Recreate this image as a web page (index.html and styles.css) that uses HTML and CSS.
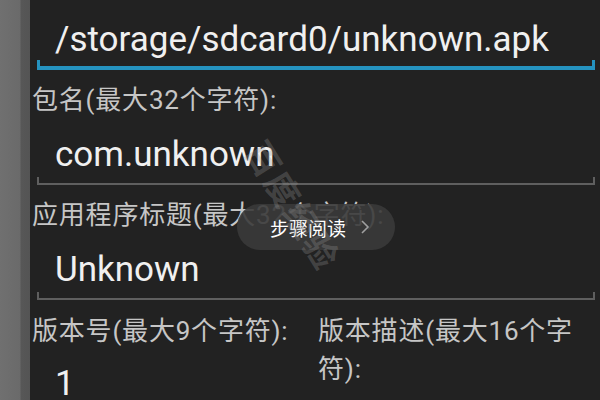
FILE: index.html
```html
<!DOCTYPE html>
<html lang="zh-CN">
<head>
    <meta charset="UTF-8">
    <meta name="viewport" content="width=device-width, initial-scale=1.0">
    <title>APK 信息</title>
    <link rel="stylesheet" href="styles.css">
</head>
<body>

<div class="screen">
    <div class="rail"></div>

    <div class="form">
        <div class="value">/storage/sdcard0/unknown.apk</div>
        <div class="line focused"></div>

        <div class="label">包名(最大32个字符):</div>
        <div class="value">com.unknown</div>
        <div class="line"></div>

        <div class="label">应用程序标题(最大32个字符):</div>
        <div class="value">Unknown</div>
        <div class="line"></div>

        <div class="pair">
            <div>
                <div class="label">版本号(最大9个字符):</div>
                <div class="value">1</div>
            </div>
            <div>
                <div class="label">版本描述(最大16个字符):</div>
            </div>
        </div>
    </div>

    <div class="watermark">百度经验</div>
    <div class="step-pill">
        <span>步骤阅读</span>
        <svg class="chev" width="10" height="16" viewBox="0 0 10 16">
            <path d="M2 2 L8 8 L2 14" fill="none" stroke="#a0a0a0" stroke-width="1.6"/>
        </svg>
    </div>
</div>

</body>
</html>
```

FILE: styles.css
```css
body {
    margin: 0;
    padding: 0;
    background-color: #222222;
    font-family: Roboto, "Noto Sans CJK SC", sans-serif;
}

.screen {
    position: relative;
    display: flex;
    width: 600px;
    height: 400px;
    overflow: hidden;
}

.rail {
    width: 30px;
    flex: none;
    background: linear-gradient(to right, #707070 0, #6a6a6a 20px, #575757 21px, #545454 30px);
}

.form {
    flex: 1;
    padding: 18px 0 0 2px;
}

.value {
    font-size: 35px;
    line-height: 44px;
    color: #f0f0f0;
    padding-left: 23px;
    margin-right: 5px;
    white-space: nowrap;
}

.line {
    margin: 0 5px 0 5px;
    height: 6px;
    border: solid #5f5f5f;
    border-width: 0 2px 2px 2px;
}

.line.focused {
    margin-top: -2px;
    height: 6px;
    border-color: #2593c0;
    border-width: 0 3px 4px 3px;
}

.label {
    font-size: 26px;
    line-height: 32px;
    letter-spacing: 0.8px;
    color: #c6c6c6;
    padding: 14px 0 17px;
    white-space: nowrap;
}

.pair {
    display: grid;
    grid-template-columns: 286px 282px;
}

.pair .label {
    white-space: normal;
    line-height: 38px;
    padding-top: 12px;
    padding-bottom: 12px;
}

.step-pill {
    position: absolute;
    left: 237px;
    top: 204px;
    width: 158px;
    height: 46px;
    border-radius: 23px;
    background-color: rgba(58, 58, 58, 0.9);
    color: #ffffff;
    font-size: 19px;
    display: flex;
    align-items: center;
    justify-content: center;
    gap: 14px;
    padding-left: 8px;
    box-sizing: border-box;
}

.chev {
    display: block;
}

.watermark {
    position: absolute;
    left: 222px;
    top: 180px;
    font-size: 34px;
    font-weight: bold;
    color: rgba(150, 150, 150, 0.3);
    transform: rotate(58deg);
    letter-spacing: 2px;
    z-index: 2;
}
```
